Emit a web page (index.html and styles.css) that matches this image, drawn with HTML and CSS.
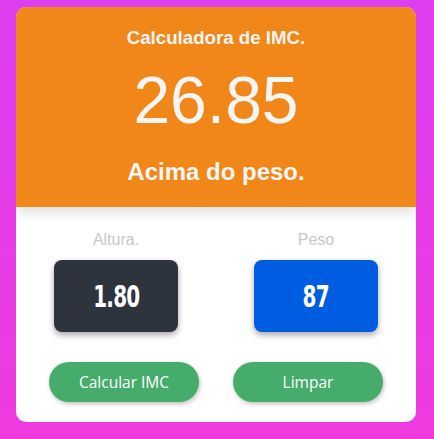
FILE: index.html
```html
<!DOCTYPE html>
<html lang="pt">
<head>
<meta charset="utf-8">
<link rel="stylesheet" href="styles.css">
</head>
<body>
<main class="card">
  <header class="result">
    <h1 class="title">Calculadora de IMC.</h1>
    <div class="value">26.85</div>
    <h2 class="status">Acima do peso.</h2>
  </header>
  <section class="inputs">
    <div class="field">
      <label class="label">Altura.</label>
      <div class="box dark"><span class="num">1.80</span></div>
    </div>
    <div class="field">
      <label class="label">Peso</label>
      <div class="box blue"><span class="num">87</span></div>
    </div>
  </section>
  <div class="actions">
    <button class="btn">Calcular IMC</button>
    <button class="btn">Limpar</button>
  </div>
</main>
</body>
</html>
```
FILE: styles.css
```css
html, body { margin: 0; padding: 0; }
body {
  width: 434px;
  height: 439px;
  background: linear-gradient(180deg, #dc3ef0 0%, #ef3ade 100%);
  font-family: "Liberation Sans", Arial, sans-serif;
  padding-top: 7px;
  box-sizing: border-box;
}
.card {
  width: 400px;
  height: 415px;
  margin-left: 16px;
  background: #fff;
  border-radius: 10px;
  overflow: hidden;
  display: flex;
  flex-direction: column;
}
.result {
  height: 200px;
  background: #f08718;
  color: #f5f5f5;
  text-align: center;
  box-shadow: 0 6px 12px rgba(0,0,0,0.12);
  position: relative;
  z-index: 1;
  display: flex;
  flex-direction: column;
  align-items: center;
}
.title {
  margin: 20px 0 0;
  font-size: 18.7px;
  font-weight: 700;
  line-height: 22px;
}
.value {
  margin-top: 14px;
  font-size: 66px;
  line-height: 74px;
  font-weight: 400;
}
.status {
  margin: 21px 0 0;
  font-size: 24px;
  font-weight: 700;
  line-height: 28px;
}
.inputs {
  display: grid;
  grid-template-columns: 1fr 1fr;
  padding-top: 24px;
}
.field {
  display: flex;
  flex-direction: column;
  align-items: center;
}
.label {
  color: #c8c8c8;
  font-size: 16px;
  line-height: 18px;
}
.box {
  margin-top: 11px;
  width: 124px;
  height: 72px;
  border-radius: 8px;
  display: flex;
  align-items: center;
  justify-content: center;
  color: #fff;
  box-shadow: 0 3px 6px rgba(0,0,0,0.35);
}
.num {
  display: inline-block;
  font-family: "DejaVu Sans Condensed", "DejaVu Sans", sans-serif;
  font-weight: 700;
  font-size: 30px;
  line-height: 30px;
  letter-spacing: -1px;
  transform: scaleX(0.74);
  margin-top: 2px;
}
.dark { background: #2e343e; }
.blue { background: #005ce0; }
.actions {
  display: flex;
  justify-content: center;
  gap: 34px;
  margin-top: 30px;
}
.btn {
  width: 150px;
  height: 40px;
  border: none;
  border-radius: 20px;
  background: #45ac6b;
  color: #fff;
  font-family: "Open Sans", "Noto Sans", sans-serif;
  font-size: 15.5px;
  box-shadow: 1px 2px 4px rgba(0,0,0,0.25);
  padding: 0;
}
```
